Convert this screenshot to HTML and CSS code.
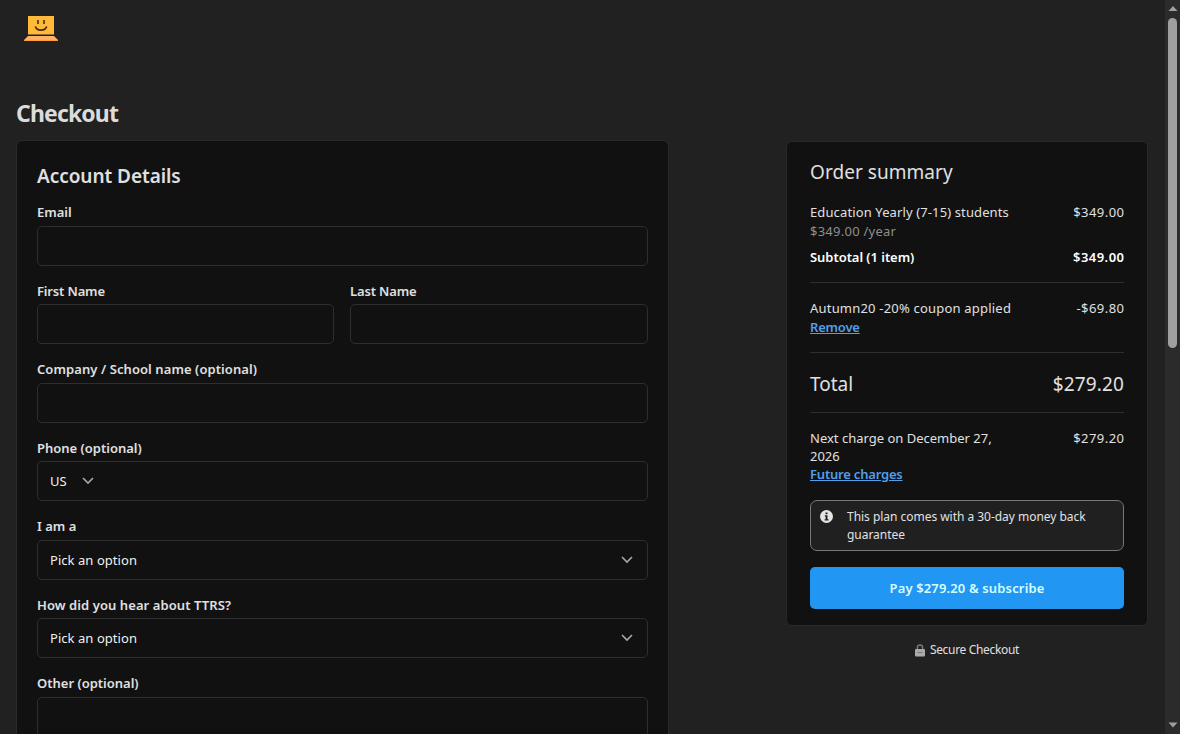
FILE: index.html
```html
<!DOCTYPE html>
<html lang="en">
<head>
<meta charset="utf-8">
<title>Checkout</title>
<link rel="stylesheet" href="styles.css">
</head>
<body>
<div class="page">
  <header class="header">
    <svg class="logo" width="34" height="26" viewBox="0 0 34 26">
      <path d="M4 0h26v18.500H4z" fill="#ffb938"/>
      <path d="M4 20h26l4 4v1H0v-1z" fill="#ffb06a"/>
      <path d="M0 24h34v1H0z" fill="#ff9d35"/>
      <path d="M14 4v4M20 4v4" stroke="#4a2d0c" stroke-width="1.600"/>
      <path d="M11.300 10.500c1.500 4.800 9.900 4.800 11.400 0" fill="none" stroke="#4a2d0c" stroke-width="1.700"/>
    </svg>
  </header>
  <h1 class="title">Checkout</h1>
  <div class="columns">
    <main class="card details">
      <h2 class="details-title">Account Details</h2>
      <div class="field"><label class="label">Email</label><div class="input"></div></div>
      <div class="pair">
        <div class="field"><label class="label tight">First Name</label><div class="input"></div></div>
        <div class="field"><label class="label tight">Last Name</label><div class="input"></div></div>
      </div>
      <div class="field"><label class="label loose">Company / School name (optional)</label><div class="input"></div></div>
      <div class="field"><label class="label">Phone (optional)</label>
        <div class="input phone"><span>US</span><svg class="chevron" width="12" height="8" viewBox="0 0 12 8"><path d="M1 1l5 5 5-5"/></svg></div></div>
      <div class="field"><label class="label">I am a</label>
        <div class="input select"><span>Pick an option</span><svg class="chevron" width="12" height="8" viewBox="0 0 12 8"><path d="M1 1l5 5 5-5"/></svg></div></div>
      <div class="field"><label class="label loose">How did you hear about TTRS?</label>
        <div class="input select"><span>Pick an option</span><svg class="chevron" width="12" height="8" viewBox="0 0 12 8"><path d="M1 1l5 5 5-5"/></svg></div></div>
      <div class="field"><label class="label">Other (optional)</label><div class="input"></div></div>
    </main>
    <aside class="side">
      <section class="card summary">
        <h2 class="summary-title">Order summary</h2>
        <div class="row item"><span>Education Yearly (7-15) students</span><span class="price">$349.00</span></div>
        <div class="muted">$349.00 /year</div>
        <div class="row subtotal"><span>Subtotal (1 item)</span><span class="price">$349.00</span></div>
        <div class="section coupon">
          <div class="row"><span>Autumn20 -20% coupon applied</span><span class="price">-$69.80</span></div>
          <a class="link">Remove</a>
        </div>
        <div class="section row total"><span>Total</span><span class="amount">$279.20</span></div>
        <div class="section next">
          <div class="row"><span>Next charge on December 27,<br>2026</span><span class="price">$279.20</span></div>
          <a class="link">Future charges</a>
        </div>
        <div class="notice">
          <svg class="info" width="13" height="13" viewBox="0 0 13 13"><circle cx="6.500" cy="6.500" r="6.500" fill="#e4e4e4"/><path d="M5.500 2.500h2v1.700h-2zM4.800 5.300h2.700v4h1v1.300H4.600V9.300h1V6.600h-.8z" fill="#202020"/></svg>
          <p class="notice-text">This plan comes with a 30-day money back<br>guarantee</p>
        </div>
        <button class="pay">Pay $279.20 &amp; subscribe</button>
      </section>
      <div class="secure">
        <svg width="10" height="13" viewBox="0 0 10 13"><path d="M2.400 6V3.700a2.600 2.600 0 0 1 5.200 0V6" fill="none" stroke="#777" stroke-width="1.500"/><rect y="5" width="10" height="7.500" rx="1" fill="#aaa"/><path d="M2.500 8.500h5" stroke="#777"/></svg>
        <span>Secure Checkout</span>
      </div>
    </aside>
  </div>
</div>
<div class="scrollbar">
  <svg width="10" height="6" viewBox="0 0 10 6"><path d="M5 0l4.500 5h-9z" fill="#9f9f9f"/></svg>
  <div class="thumb"></div>
  <svg class="down" width="10" height="6" viewBox="0 0 10 6"><path d="M5 5.500L.5.500h9z" fill="#9f9f9f"/></svg>
</div>
</body>
</html>
```
FILE: styles.css
```css
* { box-sizing: border-box; }
body {
  margin: 0;
  height: 734px;
  overflow: hidden;
  display: flex;
  background: #212121;
  color: #e0e0e0;
  font: 13px/18px "Noto Sans", "Open Sans", sans-serif;
}
h1, h2, p { margin: 0; }
.page { flex: 1; height: 734px; overflow: hidden; padding: 0 17px 0 16px; }
.header { height: 98px; padding: 16px 0 0 8px; }
.logo { display: block; }
.title { font-size: 23px; line-height: 30px; font-weight: 700; letter-spacing: -0.85px; height: 42px; color: #dcdcdc; }
.columns { display: flex; justify-content: space-between; align-items: flex-start; height: 594px; overflow: hidden; }
.card { background: #111; border: 1px solid #292929; border-radius: 6px; }
.details { width: 653px; height: 594px; overflow: hidden; padding: 20px 20px 0; border-bottom: 0; border-radius: 6px 6px 0 0; }
.details-title { font-size: 19px; line-height: 30px; height: 42.250px; font-weight: 600; letter-spacing: -0.05px; color: #e0e0e0; }
.field { margin-bottom: 16px; }
.label { display: block; height: 22.500px; font-weight: 600; }
.tight { letter-spacing: -0.15px; }
.loose { letter-spacing: 0.08px; }
.input { height: 40px; border: 1px solid #2e2e2e; border-radius: 5px; padding: 0 12px; display: flex; align-items: center; color: #f0f0f0; }
.pair { display: grid; grid-template-columns: 297px 298px; gap: 16px; }
.phone { gap: 15px; }
.select { justify-content: space-between; padding-right: 14px; letter-spacing: 0.05px; }
.chevron path { fill: none; stroke: #a5a5a5; stroke-width: 1.700; }
.side { width: 362px; padding-top: 1px; }
.summary { height: 485px; padding: 15px 23px; }
.summary-title { font-size: 19px; line-height: 30px; height: 46px; font-weight: 400; letter-spacing: 0.05px; }
.row { display: flex; justify-content: space-between; letter-spacing: 0.15px; }
.item { letter-spacing: 0.12px; }
.coupon .row { letter-spacing: 0.2px; }
.price { letter-spacing: 0.45px; margin-right: -0.45px; }
.muted { color: #8e8e8e; height: 27px; padding-top: 1px; letter-spacing: 0.25px; }
.subtotal { font-weight: 600; color: #fff; height: 34px; letter-spacing: -0.05px; }
.section { border-top: 1px solid #2e2e2e; }
.coupon { height: 70px; padding-top: 16px; }
.link { display: block; margin-top: 1px; font-weight: 600; letter-spacing: -0.2px; color: #519fe8; text-decoration: underline; }
.total { height: 60px; font-size: 19px; line-height: 62px; letter-spacing: 0; }
.amount { letter-spacing: 0.15px; }
.next { height: 88px; padding-top: 16px; }
.next .row { letter-spacing: 0; }
.next .link { margin-top: 0; }
.notice { height: 51px; display: flex; gap: 14px; padding: 7px 9px; border: 1px solid #777; border-radius: 7px; background: #202020; }
.info { margin-top: 2px; }
.notice-text { font-size: 12px; letter-spacing: -0.03px; }
.pay { display: block; width: 100%; height: 42px; margin-top: 16px; padding: 0; border: 0; border-radius: 5px; background: #2196f3; color: #d8ffff; font: 600 13px "Noto Sans", "Open Sans", sans-serif; letter-spacing: 0.15px; }
.secure { display: flex; justify-content: center; align-items: center; gap: 5px; margin-top: 15px; font-size: 12px; letter-spacing: -0.33px; }
.scrollbar { width: 15px; background: #2b2b2b; display: flex; flex-direction: column; align-items: center; padding: 6px 0; }
.thumb { width: 9px; height: 330px; margin-top: 6px; border-radius: 5px; background: #9f9f9f; }
.down { margin-top: auto; }
```
